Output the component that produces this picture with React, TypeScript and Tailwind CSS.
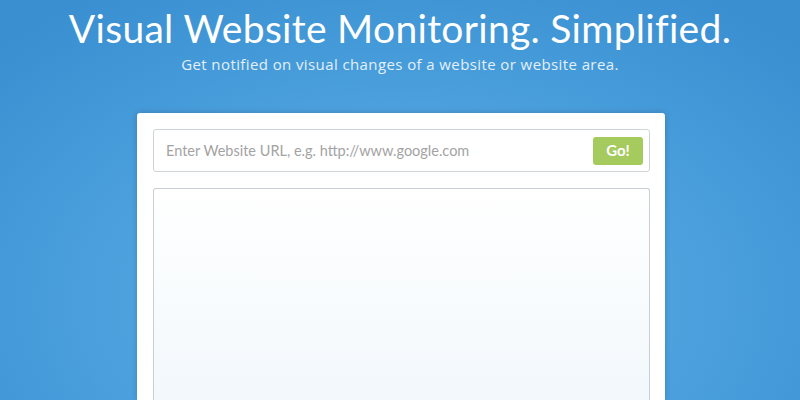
import React from "react";

export default function App() {
  return (
    <div
      className="w-[800px] h-[400px] overflow-hidden flex flex-col items-center bg-[radial-gradient(ellipse_70%_90%_at_50%_75%,#5aaee6_0%,#4ea3df_45%,#3a8fd1_100%)]"
      style={{ fontFamily: "Lato, 'Open Sans', sans-serif" }}
    >
      <h1 className="mt-[4px] text-white text-[39px] leading-[48px] font-normal tracking-[0.3px]">
        Visual Website Monitoring. Simplified.
      </h1>
      <p
        className="mt-[2px] text-[#e3f0fa] text-[15px] leading-[20px] tracking-[0.4px]"
        style={{ fontFamily: "'Open Sans', sans-serif" }}
      >
        Get notified on visual changes of a website or website area.
      </p>
      <div className="mt-[39px] ml-[2px] w-[528px] flex-1 bg-white rounded-t-[3px] shadow-[0_0_6px_rgba(0,0,0,0.18)] pl-[16px] pr-[15px] pt-[16px] flex flex-col">
        <div className="h-[43px] border border-[#cfd4d8] rounded-[3px] flex items-center pl-[12px] pr-[6px]">
          <span className="flex-1 text-[#a3a3a3] text-[14.5px]">
            Enter Website URL, e.g. http://www.google.com
          </span>
          <button className="w-[50px] h-[28px] rounded-[3px] bg-[#a5ca5e] text-white font-bold text-[15px]">
            Go!
          </button>
        </div>
        <div className="mt-[16px] flex-1 border border-b-0 border-[#c9cfd4] rounded-t-[3px] bg-gradient-to-b from-white to-[#f2f8fc]" />
      </div>
    </div>
  );
}
